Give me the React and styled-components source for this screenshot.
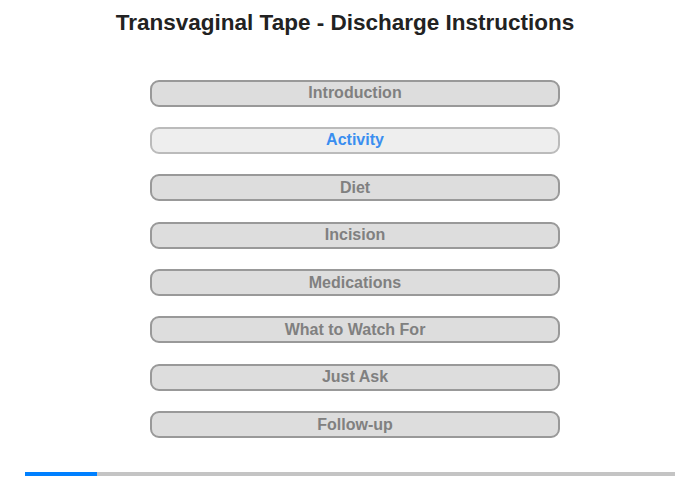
import React from 'react';
import styled, { createGlobalStyle } from 'styled-components';

const Global = createGlobalStyle`
  body {
    margin: 0;
    background: #fff;
    font-family: "Liberation Sans", Arial, sans-serif;
  }
`;

const Page = styled.div`
  width: 700px;
  height: 480px;
  position: relative;
  display: flex;
  flex-direction: column;
`;

const Title = styled.h1`
  margin: 10px 0 0 0;
  padding-right: 10px;
  text-align: center;
  font-size: 22.5px;
  font-weight: bold;
  color: #222;
  line-height: 26px;
`;

const Menu = styled.div`
  display: flex;
  flex-direction: column;
  gap: 20.4px;
  margin: 43.5px 0 0 150px;
  width: 410px;
`;

const Item = styled.div`
  box-sizing: border-box;
  height: 27px;
  border: 2px solid ${p => (p.active ? '#bbb' : '#999')};
  border-radius: 9px;
  background: ${p => (p.active ? '#eee' : '#ddd')};
  color: ${p => (p.active ? '#3a8ef0' : '#808080')};
  font-size: 16px;
  font-weight: bold;
  display: flex;
  align-items: center;
  justify-content: center;
`;

const Progress = styled.div`
  position: absolute;
  left: 25px;
  top: 472px;
  width: 650px;
  height: 4px;
  background: #c4c4c4;
`;

const Fill = styled.div`
  height: 100%;
  background: #0080ff;
`;

const items = [
  'Introduction',
  'Activity',
  'Diet',
  'Incision',
  'Medications',
  'What to Watch For',
  'Just Ask',
  'Follow-up',
];

const App = () => {
  const current = 1;
  return (
    <Page>
      <Global />
      <Title>Transvaginal Tape - Discharge Instructions</Title>
      <Menu>
        {items.map((it, i) => (
          <Item key={it} active={i === current}>{it}</Item>
        ))}
      </Menu>
      <Progress>
        <Fill style={{ width: `${(72 / 650) * 100}%` }} />
      </Progress>
    </Page>
  );
};

export default App;
